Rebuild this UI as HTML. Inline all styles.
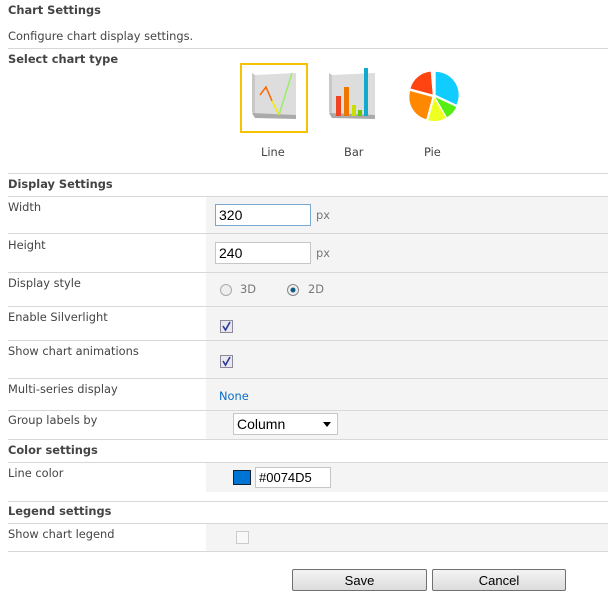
<!DOCTYPE html>
<html><head><style>
body{margin:0;width:613px;height:602px;background:#fff;font-family:"DejaVu Sans","Liberation Sans",sans-serif;font-size:11.4px;color:#444;position:relative;overflow:hidden}
.a{position:absolute;white-space:nowrap}
.b{font-weight:bold;color:#444}
.hl{position:absolute;left:8px;width:600px;height:1px;background:#d8d8d8}
.g{position:absolute;left:206px;width:402px;background:#f4f4f4}
.in{position:absolute;background:#fff;border:1px solid #c6c6c6;font-family:"Liberation Sans",sans-serif;font-size:14px;color:#000;box-sizing:border-box;padding:2px 3px;line-height:16px}
.cb{position:absolute;width:11px;height:11px;border:1px solid #8a8a9a;background:#e8e8ee}
.btn{position:absolute;top:569px;height:22px;border:1px solid #707070;border-radius:2px;background:linear-gradient(#f4f4f4,#dcdcdc);font-family:"Liberation Sans",sans-serif;font-size:13px;color:#000;text-align:center;line-height:21px;box-sizing:border-box}
</style></head><body>
<div class="a b" style="left:8px;top:3px">Chart Settings</div>
<div class="a" style="left:8px;top:29px">Configure chart display settings.</div>
<div class="hl" style="top:48px"></div>
<div class="a b" style="left:8px;top:52px">Select chart type</div>

<div style="position:absolute;left:240px;top:63px;width:64px;height:66px;border:2px solid #f7c200"></div>
<svg style="position:absolute;left:240px;top:63px" width="240" height="70">
<polygon points="15,12 56,10 56,52 15,52" fill="#ddd"/>
<polygon points="12,10 15,12 15,52 12,49" fill="#c8c8c8"/>
<polygon points="12,50 56,52 56,56 15,55" fill="#aaa"/>
<polyline points="20,32 26,24 32,38" fill="none" stroke="#f60" stroke-width="1.5"/>
<polyline points="32,38 39,52" fill="none" stroke="#ee0" stroke-width="1.5"/>
<polyline points="39,52 52,10" fill="none" stroke="#9e6" stroke-width="1.5"/>
<polygon points="92,12 135,10 135,52 92,52" fill="#ddd"/>
<polygon points="89,10 92,12 92,52 89,49" fill="#c8c8c8"/>
<polygon points="89,50 135,52 135,56 92,55" fill="#aaa"/>
<rect x="96" y="33" width="5" height="20" fill="#e42"/>
<rect x="104" y="24" width="5" height="29" fill="#e70"/>
<rect x="112" y="42" width="4" height="11" fill="#cd0"/>
<rect x="118" y="47" width="4" height="6" fill="#6c0"/>
<rect x="124" y="5" width="4" height="48" fill="#1ac"/>
<path d="M195.7,31.9 L195.7,8.9 A23,23 0 0 1 216.5,41.6 Z" fill="#1cf"/>
<path d="M195.5,34.3 L216.3,44 A23,23 0 0 1 207,54.2 Z" fill="#5e1"/>
<path d="M194.3,35 L205.8,54.9 A23,23 0 0 1 188.3,57.2 Z" fill="#ef2"/>
<path d="M192.3,34 L186.3,56.2 A23,23 0 0 1 170.1,28 Z" fill="#f80"/>
<path d="M192.7,31.5 L170.5,25.5 A23,23 0 0 1 190.7,8.6 Z" fill="#f41"/>
</svg>
<div class="a" style="left:261px;top:145px">Line</div>
<div class="a" style="left:344px;top:145px">Bar</div>
<div class="a" style="left:424px;top:145px">Pie</div>
<div class="hl" style="top:173px"></div>
<div class="a b" style="left:8px;top:177px">Display Settings</div>
<div class="hl" style="top:196px"></div>

<div class="g" style="top:197px;height:36px"></div>
<div class="a" style="left:8px;top:200px">Width</div>
<div class="in" style="left:215px;top:204px;width:96px;height:22px;border-color:#7aa7d0">320</div>
<div class="a" style="left:316px;top:208px;color:#777">px</div>
<div class="hl" style="top:233px"></div>

<div class="g" style="top:234px;height:38px"></div>
<div class="a" style="left:8px;top:238px">Height</div>
<div class="in" style="left:215px;top:242px;width:96px;height:22px">240</div>
<div class="a" style="left:316px;top:246px;color:#777">px</div>
<div class="hl" style="top:272px"></div>

<div class="g" style="top:273px;height:33px"></div>
<div class="a" style="left:8px;top:276px">Display style</div>
<div style="position:absolute;left:220px;top:284px;width:10px;height:10px;border:1px solid #aaa;border-radius:50%;background:#eee"></div>
<div class="a" style="left:240px;top:282px;color:#777">3D</div>
<div style="position:absolute;left:287px;top:284px;width:10px;height:10px;border:1px solid #888;border-radius:50%;background:radial-gradient(#0a5c8a 30%,#eee 40%)"></div>
<div class="a" style="left:308px;top:282px;color:#777">2D</div>
<div class="hl" style="top:306px"></div>

<div class="g" style="top:307px;height:33px"></div>
<div class="a" style="left:8px;top:310px">Enable Silverlight</div>
<div class="cb" style="left:220px;top:320px"></div>
<svg style="position:absolute;left:220px;top:320px" width="13" height="13"><path d="M3,6 L5.5,10 L10,2" fill="none" stroke="#2a3a9a" stroke-width="1.6"/></svg>
<div class="hl" style="top:340px"></div>

<div class="g" style="top:341px;height:37px"></div>
<div class="a" style="left:8px;top:344px">Show chart animations</div>
<div class="cb" style="left:220px;top:355px"></div>
<svg style="position:absolute;left:220px;top:355px" width="13" height="13"><path d="M3,6 L5.5,10 L10,2" fill="none" stroke="#2a3a9a" stroke-width="1.6"/></svg>
<div class="hl" style="top:378px"></div>

<div class="g" style="top:379px;height:31px"></div>
<div class="a" style="left:8px;top:382px">Multi-series display</div>
<div class="a" style="left:219px;top:389px;color:#0a6cc4">None</div>
<div class="hl" style="top:410px"></div>

<div class="g" style="top:411px;height:28px"></div>
<div class="a" style="left:8px;top:413px">Group labels by</div>
<div class="in" style="left:233px;top:413px;width:105px;height:22px">Column<svg style="position:absolute;right:6px;top:8px" width="8" height="5"><path d="M0,0 H8 L4,5 Z" fill="#000"/></svg></div>
<div class="hl" style="top:439px"></div>

<div class="a b" style="left:8px;top:443px">Color settings</div>
<div class="hl" style="top:462px"></div>
<div class="g" style="top:463px;height:29px"></div>
<div class="a" style="left:8px;top:466px">Line color</div>
<div style="position:absolute;left:233px;top:470px;width:16px;height:13px;background:#0074d5;border:1px solid #123"></div>
<div class="in" style="left:255px;top:467px;width:76px;height:21px;font-size:13px">#0074D5</div>
<div class="hl" style="top:501px"></div>

<div class="a b" style="left:8px;top:504px">Legend settings</div>
<div class="hl" style="top:523px"></div>
<div class="g" style="top:524px;height:27px"></div>
<div class="a" style="left:8px;top:527px">Show chart legend</div>
<div class="cb" style="left:236px;top:531px;border-color:#ccc;background:#f8f8f8"></div>
<div class="hl" style="top:551px"></div>

<div class="btn" style="left:292px;width:135px">Save</div>
<div class="btn" style="left:432px;width:134px">Cancel</div>
</body></html>
